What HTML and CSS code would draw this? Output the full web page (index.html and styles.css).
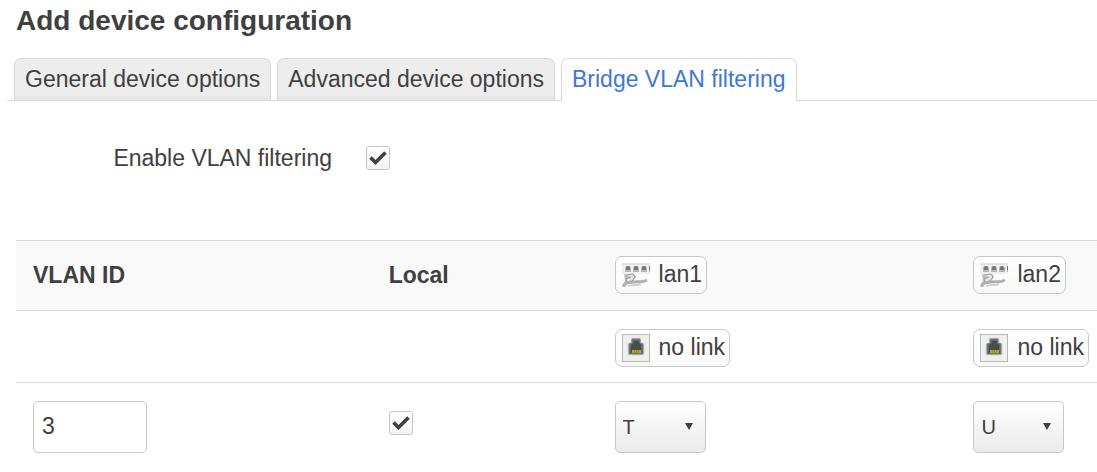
FILE: index.html
```
<!DOCTYPE html>
<html lang="en">
<head>
    <meta charset="UTF-8">
    <meta name="viewport" content="width=device-width, initial-scale=1.0">
    <title>Add device configuration</title>
    <link rel="stylesheet" href="styles.css">
</head>
<body>
    <!-- shared icons -->
    <svg class="sprite" aria-hidden="true">
        <symbol id="icon-switch" viewBox="0 0 28 26">
            <rect x="0" y="1" width="28" height="11" fill="#efefef"/>
            <path d="M0 2h28" stroke="#d6d6d6" stroke-width="1"/>
            <path d="M3 10V6l1-2h4l1 2v4zM11 10V6l1-2h4l1 2v4zM19 10V6l1-2h4l1 2v4zM27 10V4h1v6z" fill="#b5b5b5"/>
            <path d="M4 8V6l1-2h2l1 2v2zM12 8V6l1-2h2l1 2v2zM20 8V6l1-2h2l1 2v2zM27 8V4h1v4z" fill="#777"/>
            <path d="M2 12l3 1 7-1 2 3-3 4-5 2-3 4H0l3-6z" fill="#bdbdbd"/>
            <path d="M4 13l7-1 2 3-3 4-5 1-1-3 5-2" fill="#e6e6e6" stroke="#999" stroke-width="1"/>
            <path d="M1 24l3-3 7-1c5-1 9 1 14-2" fill="none" stroke="#b0b0b0" stroke-width="3"/>
            <path d="M6 24c5-2 9 0 13-2" fill="none" stroke="#d2d2d2" stroke-width="2"/>
        </symbol>
        <symbol id="icon-port" viewBox="0 0 28 28">
            <rect x="0.5" y="0.5" width="27" height="27" fill="#eff1ef" stroke="#b5b8b5"/>
            <path d="M6 21V9h3V4h10v5h3v12z" fill="#d5d8d5" stroke="#d5d8d5" stroke-width="1"/>
            <path d="M7 20V10l3-1V5h8v4l3 1v10z" fill="#62676a" stroke="#7b8082" stroke-width="1"/>
            <path d="M9 19v-8l3-2V7h5v2l2 2v8z" fill="#4a4d4d"/>
            <path d="M10 16h9v3h-9z" fill="#b8a520"/>
            <path d="M12.500 16v3M14.500 16v3M16.500 16v3" stroke="#8b7d20" stroke-width="0.600"/>
        </symbol>
    </svg>

    <h4>Add device configuration</h4>

    <ul class="tabmenu">
        <li><a href="#general">General device options</a></li>
        <li><a href="#advanced">Advanced device options</a></li>
        <li class="active"><a href="#bridgevlan">Bridge VLAN filtering</a></li>
    </ul>

    <div class="tab-content" id="bridgevlan">
        <div class="option">
            <label for="vlan_filtering">Enable VLAN filtering</label>
            <input type="checkbox" id="vlan_filtering" checked>
        </div>

        <table class="vlans">
            <colgroup>
                <col class="col-id">
                <col class="col-local">
                <col class="col-port">
                <col>
            </colgroup>
            <thead>
                <tr>
                    <th id="vlan-id">VLAN ID</th>
                    <th id="vlan-local">Local</th>
                    <th id="port-lan1"><span class="badge"><svg class="icon-switch"><use href="#icon-switch"/></svg>lan1</span></th>
                    <th id="port-lan2"><span class="badge"><svg class="icon-switch"><use href="#icon-switch"/></svg>lan2</span></th>
                </tr>
            </thead>
            <tbody>
                <tr>
                    <td></td>
                    <td></td>
                    <td><span class="badge"><svg class="icon-port"><use href="#icon-port"/></svg>no link</span></td>
                    <td><span class="badge"><svg class="icon-port"><use href="#icon-port"/></svg>no link</span></td>
                </tr>
                <tr class="vlan-row">
                    <td><input type="text" aria-labelledby="vlan-id" value="3"></td>
                    <td><input type="checkbox" aria-labelledby="vlan-local" checked></td>
                    <td>
                        <select aria-labelledby="port-lan1">
                            <option>-</option>
                            <option selected>T</option>
                            <option>U</option>
                        </select>
                    </td>
                    <td>
                        <select aria-labelledby="port-lan2">
                            <option>-</option>
                            <option>T</option>
                            <option selected>U</option>
                        </select>
                    </td>
                </tr>
            </tbody>
        </table>
    </div>
</body>
</html>
```
FILE: styles.css
```
* {
    box-sizing: border-box;
}
body {
    margin: 0;
    font-family: "Liberation Sans", Arial, Helvetica, sans-serif;
    font-size: 23px;
    line-height: 28px;
    color: #404040;
    background: #fff;
}
.sprite {
    display: none;
}
h4 {
    margin: 0;
    padding: 3px 16px 19px;
    font-size: 28px;
    line-height: 36px;
}

/* tabs */
.tabmenu {
    display: flex;
    gap: 6px;
    margin: 0 0 0 7px;
    padding: 0 7px;
    list-style: none;
    border-bottom: 1px solid #d9d9d9;
}
.tabmenu li {
    height: 42px;
    padding: 6px 10px;
    border: 1px solid #d9d9d9;
    border-bottom: 0;
    border-radius: 7px 7px 0 0;
    background: linear-gradient(#ededed 88%, #e3e3e3);
    white-space: nowrap;
}
.tabmenu li.active {
    height: 43px;
    margin-bottom: -1px;
    background: #fff;
}
.tabmenu a {
    color: #404040;
    text-decoration: none;
}
.tabmenu .active a {
    color: #3d78d8;
}

/* options */
.tab-content {
    padding: 43px 0 0 16px;
}
.option {
    display: flex;
    align-items: center;
    gap: 34px;
    padding-bottom: 68px;
}
.option label {
    width: 316px;
    text-align: right;
}
input[type="checkbox"] {
    appearance: none;
    display: block;
    width: 24px;
    height: 24px;
    margin: 0;
    border: 1px solid #c6c6c6;
    border-radius: 3px;
    background: linear-gradient(#fff, #f3f3f3);
}
input[type="checkbox"]:checked {
    background: url("data:image/svg+xml,%3Csvg xmlns='http://www.w3.org/2000/svg' viewBox='0 0 22 22'%3E%3Cpath d='M3.500 10.500l5 5L18.500 5.500' fill='none' stroke='%23404040' stroke-width='3.600'/%3E%3C/svg%3E"), linear-gradient(#fff, #f3f3f3);
}

/* vlan table */
.vlans {
    width: 100%;
    table-layout: fixed;
    border-collapse: collapse;
}
.col-id {
    width: 32.9%;
}
.col-local {
    width: 20.9%;
}
.col-port {
    width: 33.2%;
}
.vlans th,
.vlans td {
    height: 70px;
    padding: 0 0 2px 17px;
    border-top: 1px solid #d9d9d9;
    text-align: left;
    vertical-align: middle;
}
.vlans td {
    height: 72px;
    padding: 2px 0 0 17px;
}
.vlans th {
    background: #f9f9f9;
}
.vlans .vlan-row td {
    height: 88px;
    padding-top: 0;
}
.vlans input[type="checkbox"] {
    margin-bottom: 8px;
}
.badge {
    display: inline-flex;
    align-items: center;
    gap: 9px;
    height: 38px;
    padding: 0 4px 2px 6px;
    border: 1px solid #c8c8c8;
    border-radius: 7px;
    background: linear-gradient(#fff, #f9f9f9);
    font-weight: normal;
    white-space: nowrap;
    vertical-align: middle;
}
.badge svg {
    width: 28px;
    height: 28px;
    margin-top: 2px;
}
input[type="text"],
select {
    display: block;
    height: 52px;
    border: 1px solid #c8c8c8;
    border-radius: 5px;
    color: #404040;
    font-family: inherit;
}
input[type="text"] {
    width: 114px;
    padding: 0 8px;
    font-size: 23px;
}
select {
    appearance: none;
    width: 91px;
    padding: 0 7px;
    font-size: 20px;
    background: url("data:image/svg+xml,%3Csvg xmlns='http://www.w3.org/2000/svg' viewBox='0 0 8 7'%3E%3Cpath d='M0 0h8L4 7z' fill='%23404040'/%3E%3C/svg%3E") right 12px center / 8px 7px no-repeat, linear-gradient(#fff, #ebebeb);
}
```
